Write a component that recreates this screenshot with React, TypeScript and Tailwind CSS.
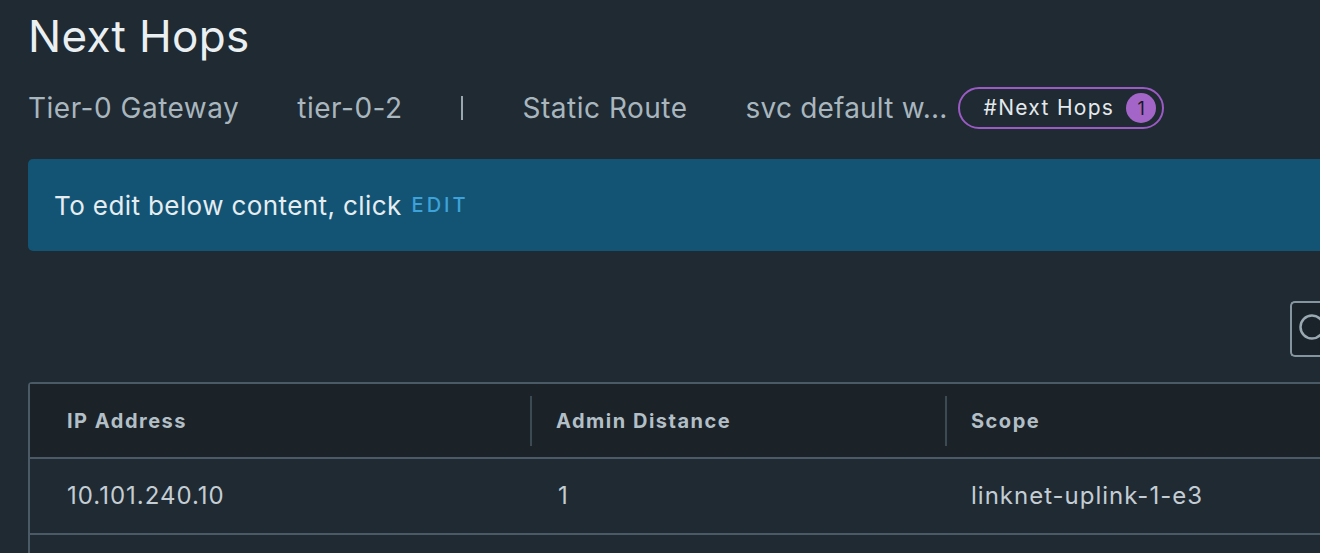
import React from "react";

export default function App() {
  const font = { fontFamily: "Inter, 'Open Sans', sans-serif" };
  return (
    <div className="w-[1320px] h-[553px] overflow-hidden bg-[#1f2a33] text-[#c9d2d8]" style={font}>
      <div className="pl-[28px] pt-[10px]">
        <h1 className="text-[44px] leading-[52px] tracking-[0.3px] text-[#eaeff2] font-normal">Next Hops</h1>
        <div className="mt-[24px] flex items-center h-[44px] text-[28px] tracking-[0.5px] text-[#a9b6be]">
          <span>Tier-0 Gateway</span>
          <span className="ml-[58px]">tier-0-2</span>
          <span className="ml-[58px] w-[2px] h-[24px] bg-[#9aa7af]"></span>
          <span className="ml-[60px]">Static Route</span>
          <span className="ml-[58px] tracking-[0.2px]">svc default w...</span>
          <span className="ml-[10px] flex items-center h-[42px] pl-[24px] pr-[6px] rounded-full border-2 border-[#9b5ac4] text-[#e4e9ec] text-[21px] tracking-[1.3px]">
            #Next Hops
            <span className="ml-[12px] flex items-center justify-center w-[30px] h-[30px] rounded-full bg-[#a365c8] text-[#1a1a1a] text-[18px] tracking-normal">1</span>
          </span>
        </div>
      </div>
      <div className="ml-[28px] mt-[29px] h-[92px] rounded-l-[5px] bg-[#135475] flex items-center pl-[26px] text-[26px] tracking-[0.4px] text-[#e6edf1]">
        <span>To edit below content, click</span>
        <span className="ml-[10px] text-[20px] tracking-[3px] text-[#3ea2da] font-medium">EDIT</span>
      </div>
      <div className="flex justify-end mt-[50px]">
        <div className="w-[30px] h-[56px] rounded-l-[5px] border-2 border-r-0 border-[#8595a0] bg-[#1a232a] flex items-center pl-[7px] overflow-hidden">
          <svg width="30" height="30" viewBox="0 0 30 30" className="shrink-0">
            <circle cx="13" cy="13" r="11.5" fill="none" stroke="#9aa8b1" strokeWidth="2.5" />
          </svg>
        </div>
      </div>
      <div className="ml-[28px] mt-[25px] border-l-2 border-t-2 border-[#4a5a66] rounded-tl-[4px]">
        <div className="flex h-[75px] bg-[#1b2329] items-center text-[20px] font-bold tracking-[1.5px] text-[#b3bfc6] border-b-2 border-[#4a5a66]">
          <div className="w-[502px] pl-[37px] h-[50px] flex items-center border-r-2 border-[#3c4a54]">IP Address</div>
          <div className="w-[415px] pl-[24px] h-[50px] flex items-center border-r-2 border-[#3c4a54]">Admin Distance</div>
          <div className="flex-1 pl-[24px] h-[50px] flex items-center">Scope</div>
        </div>
        <div className="flex h-[76px] items-center text-[24px] tracking-[1px] text-[#c4cdd3] border-b-2 border-[#4a5a66]">
          <div className="w-[502px] pl-[37px]">10.101.240.10</div>
          <div className="w-[415px] pl-[26px]">1</div>
          <div className="flex-1 pl-[24px]">linknet-uplink-1-e3</div>
        </div>
        <div className="h-[30px]"></div>
      </div>
    </div>
  );
}
